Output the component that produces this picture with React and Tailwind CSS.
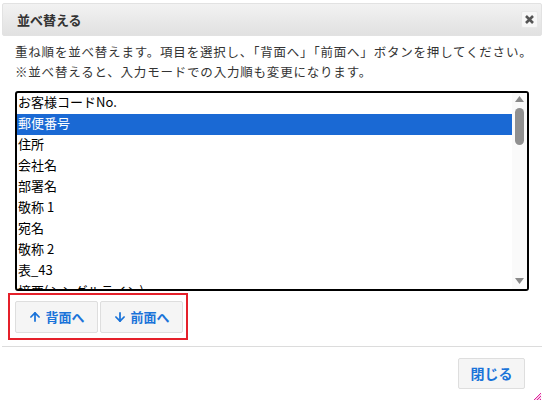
import React from "react";
import { ArrowUp, ArrowDown } from "lucide-react";

const items = [
  "お客様コードNo.",
  "郵便番号",
  "住所",
  "会社名",
  "部署名",
  "敬称 1",
  "宛名",
  "敬称 2",
  "表_43",
  "摘要(シングルライン)",
];

export default function App() {
  return (
    <div
      className="w-[545px] h-[403px] bg-white relative overflow-hidden text-[#333]"
      style={{ fontFamily: '"Noto Sans CJK JP", "Noto Sans", sans-serif' }}
    >
      <div className="ml-[2px] pt-[3px] w-[540px]">
        {/* header */}
        <div className="h-[33px] flex items-center justify-between pl-[14px] pr-[3px] rounded-[2px] border border-[#e2e2e2] bg-gradient-to-b from-[#f2f2f2] to-[#e1e1e1]">
          <span className="text-[13px] font-bold text-[#333] leading-none">並べ替える</span>
          <div className="w-[17px] h-[17px] flex items-center justify-center bg-[#f7f7f7] border border-[#e8e8e8] rounded-[2px]">
            <svg width="9" height="9" viewBox="0 0 9 9">
              <path d="M1 1 L8 8 M8 1 L1 8" stroke="#555" strokeWidth="2.6" strokeLinecap="butt" />
            </svg>
          </div>
        </div>

        {/* body */}
        <div className="px-[13px] pt-[6px]">
          <p className="text-[12.5px] leading-[20px] text-[#333] tracking-[0.8px] whitespace-nowrap">
            重ね順を並べ替えます。項目を選択し、「背面へ」「前面へ」ボタンを押してください。
            <br />
            ※並べ替えると、入力モードでの入力順も変更になります。
          </p>

          <div className="mt-[9px] w-[514px] h-[200px] border-2 border-black rounded-[3px] flex overflow-hidden">
            <div className="flex-1 overflow-hidden">
              {items.map((t, i) => (
                <div
                  key={i}
                  className={
                    "h-[21px] pl-[1px] text-[13px] leading-[18px] whitespace-nowrap " +
                    (i === 1 ? "bg-[#1a69d4] text-white" : "text-black")
                  }
                >
                  {t}
                </div>
              ))}
            </div>
            <div className="w-[15px] bg-[#fafafa] flex flex-col items-center">
              <svg width="9" height="6" viewBox="0 0 9 6" className="mt-[3px]">
                <path d="M4.5 0 L9 6 L0 6 Z" fill="#8a8a8a" />
              </svg>
              <div className="mt-[6px] w-[9px] h-[37px] rounded-[5px] bg-[#909090]" />
              <div className="flex-1" />
              <svg width="9" height="6" viewBox="0 0 9 6" className="mb-[5px]">
                <path d="M0 0 L9 0 L4.5 6 Z" fill="#8a8a8a" />
              </svg>
            </div>
          </div>

          {/* sort buttons */}
          <div className="relative mt-[10px] flex gap-[2px] h-[32px]">
            <button className="w-[83px] h-[32px] flex items-center justify-center gap-[3px] bg-[#f5f5f5] border border-[#dedede] rounded-[2px] text-[#1a73d9] text-[13px] font-bold">
              <ArrowUp size={14} strokeWidth={3} />
              <span>背面へ</span>
            </button>
            <button className="w-[83px] h-[32px] flex items-center justify-center gap-[3px] bg-[#f5f5f5] border border-[#dedede] rounded-[2px] text-[#1a73d9] text-[13px] font-bold">
              <ArrowDown size={14} strokeWidth={3} />
              <span>前面へ</span>
            </button>
            <div className="absolute left-[-7px] top-[-8px] w-[180px] h-[47px] border-2 border-[#e5202a] pointer-events-none" />
          </div>
        </div>

        {/* separator */}
        <div className="mt-[13px] h-px bg-[#dcdcdc]" />

        {/* footer */}
        <div className="flex justify-end pr-[17px] pt-[11px]">
          <button className="w-[67px] h-[31px] flex items-center justify-center bg-[#f5f5f5] border border-[#dedede] rounded-[2px] text-[#1a73d9] text-[14px] font-bold">
            閉じる
          </button>
        </div>
      </div>

      {/* resize grip */}
      <svg width="9" height="9" viewBox="0 0 9 9" className="absolute left-[533px] top-[392px]">
        <path d="M8 1 L1 8 M8 4 L4 8 M8 7 L7 8" stroke="#e0229a" strokeWidth="1" />
        <path d="M8 2.5 L2.5 8 M8 5.5 L5.5 8" stroke="#f07ac4" strokeWidth="0.8" />
      </svg>
    </div>
  );
}
